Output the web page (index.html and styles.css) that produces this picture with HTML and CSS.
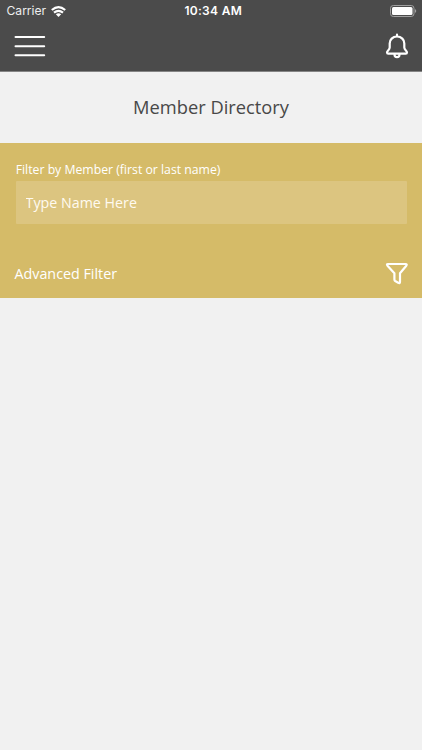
FILE: index.html
```html
<!DOCTYPE html>
<html lang="en">
<head>
<meta charset="utf-8">
<title>Member Directory</title>
<link rel="stylesheet" href="styles.css">
</head>
<body>
<header class="top">
  <div class="status">
    <div class="carrier"><span>Carrier</span>
      <svg width="15" height="11" viewBox="0 0 15 11" fill="none" stroke="#fff" stroke-width="2.200"><path d="M.8 4Q7.500-1.600 14.200 4M3 6.700Q7.500 3.100 12 6.700"/><path d="M4.800 8.200Q7.500 6.100 10.200 8.200L7.500 10.900Z" fill="#fff" stroke="none"/></svg>
    </div>
    <div class="time">10:34 AM</div>
    <svg class="battery" width="27" height="12" viewBox="0 0 27 12"><rect x=".5" y=".5" width="23.500" height="11" rx="2.800" fill="none" stroke="#a0a0a0"/><rect x="2" y="2" width="20.500" height="8" rx="1.500" fill="#fff"/><path d="M25 4Q27.500 6 25 8Z" fill="#a0a0a0"/></svg>
  </div>
  <nav class="nav">
    <svg width="32" height="22" viewBox="0 0 32 22" stroke="#fff" stroke-width="2" stroke-linecap="round"><path d="M1.500 2H30.200M1.500 11.200H30.200M1.500 20.300H30.200"/></svg>
    <svg width="24" height="26" viewBox="0 0 24 26" fill="none" stroke="#fff" stroke-width="2.200" stroke-linejoin="round" stroke-linecap="round"><path d="M12 1.700V3.200M12 3.500C7.500 3.500 4.700 6.800 4.700 10.500V14.500C4.700 16.800 2 17.800 2 19.300Q2 20.700 3.300 20.700H20.700Q22 20.700 22 19.300C22 17.800 19.300 16.800 19.300 14.500V10.500C19.300 6.800 16.500 3.500 12 3.500ZM9.500 21.500C9.500 25 14.500 25 14.500 21.500"/></svg>
  </nav>
</header>
<h1 class="title">Member Directory</h1>
<section class="filter">
  <label class="label" for="name">Filter by Member (first or last name)</label>
  <input class="field" id="name" type="text" placeholder="Type Name Here">
  <div class="advanced">
    <span>Advanced Filter</span>
    <svg width="24" height="24" viewBox="0 0 24 24" fill="none" stroke="#fff" stroke-width="2.200" stroke-linejoin="round"><path d="M3 3H20.500Q22.500 3 21.300 4.700L15 12.200V20.700Q15 22.700 13.200 21.700L10.200 20Q9.400 19.500 9.400 18.500V12.200L2.500 4.700Q1.200 3 3 3Z"/></svg>
  </div>
</section>
</body>
</html>
```

FILE: styles.css
```css
* { box-sizing: border-box; }
body { margin: 0; background: #f1f1f1; font-family: "Open Sans", sans-serif; color: #484848; }
svg { display: block; flex: none; }
.top { height: 72px; background: #4b4b4b; color: #fff; border-bottom: 1px solid #858585; }
.status { height: 22px; display: grid; grid-template-columns: 1fr auto 1fr; align-items: center; padding: 0 5px 0 6.5px; font: 12.1px/22px Inter, sans-serif; }
.carrier { display: flex; align-items: center; gap: 5px; color: #eee; }
.time { font-size: 12px; font-weight: 600; letter-spacing: .3px; padding-left: 3px; }
.battery { justify-self: end; }
.nav { height: 49px; display: flex; align-items: center; justify-content: space-between; padding: 0 13px 1px 14px; }
.title { margin: 0; height: 71px; font-size: 18.3px; font-weight: 400; line-height: 70px; text-align: center; }
.filter { height: 155px; padding: 17px 15px 0; background: #d5bb68; color: #fff; }
.label { display: block; height: 21px; margin-left: .7px; font-size: 12.25px; line-height: 19px; }
.field { display: block; width: 391px; height: 43px; margin-left: .6px; padding: 0 10px; border: 0; border-radius: 1px; background: #dcc580; color: #fff; font: 14.25px "Open Sans", sans-serif; }
.field::placeholder { color: #fffaf0; opacity: 1; }
.advanced { display: flex; align-items: center; justify-content: space-between; height: 48px; margin: 25px -2px 0 -.5px; font-size: 14.3px; }
```
